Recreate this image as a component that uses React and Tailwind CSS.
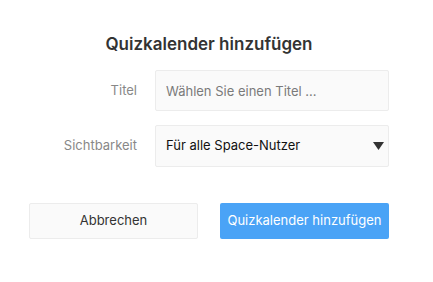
import React, { useState } from "react";

export default function App() {
  const [title, setTitle] = useState("");
  const [visibility, setVisibility] = useState("all");

  return (
    <div
      className="w-[418px] bg-white px-[29px] pt-[33px] pb-[43px] text-[#333]"
      style={{ fontFamily: "Inter, 'Noto Sans', sans-serif" }}
    >
      <h2 className="text-center text-[17px] leading-[22px] font-semibold text-[#333]">
        Quizkalender hinzufügen
      </h2>

      <div className="mt-[15px] flex flex-col gap-[14px]">
        <div className="flex items-center gap-[18px]">
          <label className="w-[108px] text-right text-[13px] text-[#888]">Titel</label>
          <input
            value={title}
            onChange={(e) => setTitle(e.target.value)}
            placeholder="Wählen Sie einen Titel ..."
            className="h-[41px] w-[234px] rounded-[2px] border border-[#ececec] bg-[#fafafa] px-[10px] text-[13px] text-[#222] placeholder:text-[#7a7a7a] outline-none"
          />
        </div>

        <div className="flex items-center gap-[18px]">
          <label className="w-[108px] text-right text-[13px] text-[#888]">Sichtbarkeit</label>
          <div className="relative h-[42px] w-[234px]">
            <select
              value={visibility}
              onChange={(e) => setVisibility(e.target.value)}
              className="h-full w-full appearance-none rounded-[2px] border border-[#ececec] bg-[#fafafa] px-[10px] text-[13px] text-[#111] outline-none"
            >
              <option value="all">Für alle Space-Nutzer</option>
              <option value="me">Nur für mich</option>
            </select>
            <svg
              className="pointer-events-none absolute right-[5px] top-[17px]"
              width="11"
              height="8"
              viewBox="0 0 11 8"
            >
              <path d="M0 0h11L5.5 8z" fill="#333" />
            </svg>
          </div>
        </div>
      </div>

      <div className="mt-[36px] flex gap-[22px]">
        <button className="h-[36px] w-[169px] rounded-[2px] border border-[#ececec] bg-[#fafafa] text-[13px] text-[#333]">
          Abbrechen
        </button>
        <button className="h-[36px] w-[169px] rounded-[2px] bg-[#4aa3f6] text-[13px] text-white">
          Quizkalender hinzufügen
        </button>
      </div>
    </div>
  );
}
